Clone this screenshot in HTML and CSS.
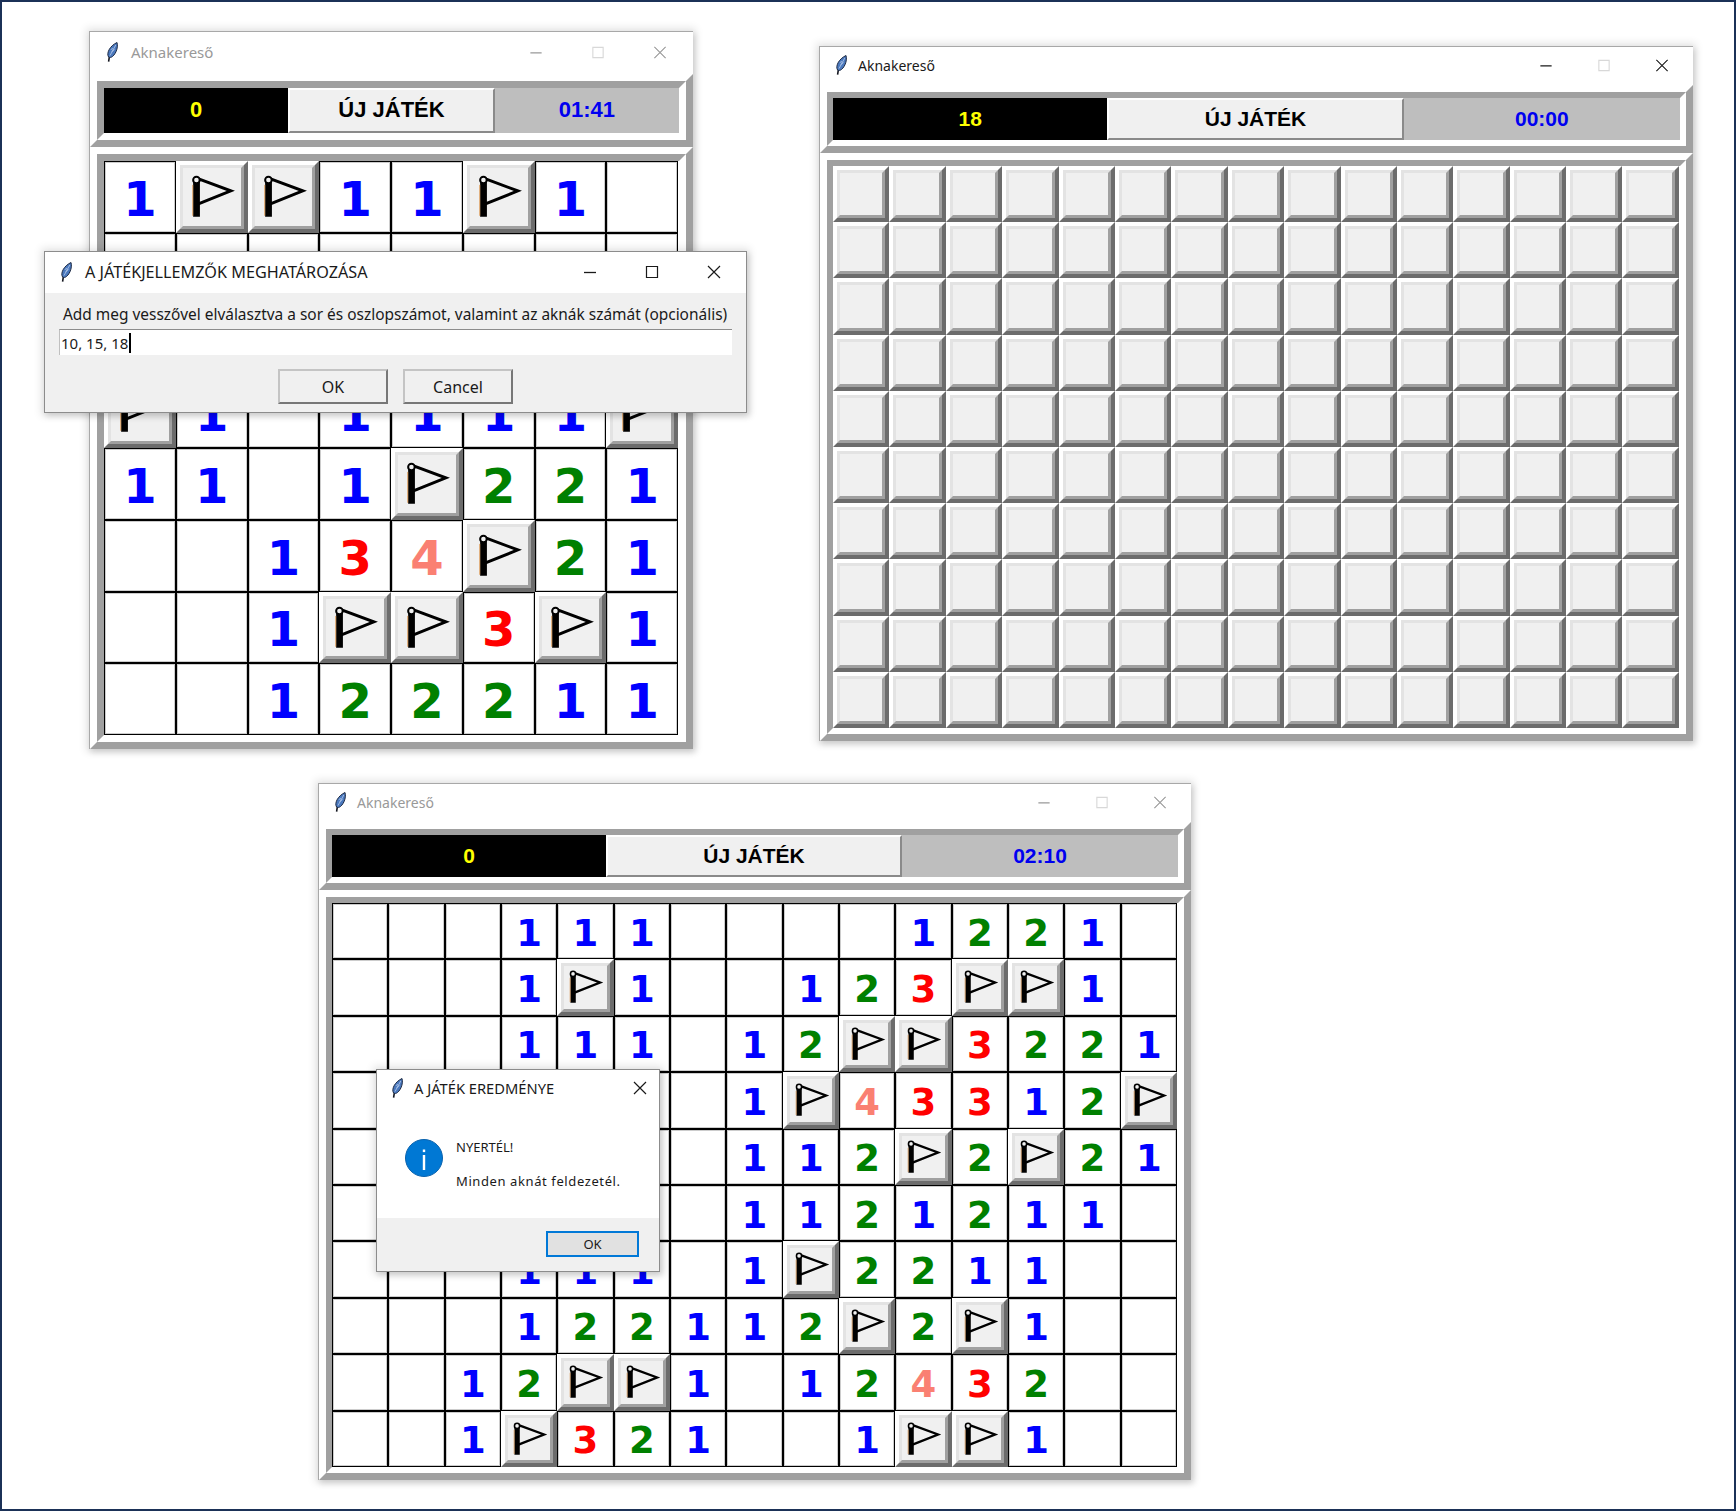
FILE: index.html
```html
<!DOCTYPE html>
<html>
	<head>
		<meta charset="utf-8"/>
		<title>Aknakereső</title>
		<link rel="stylesheet" href="styles.css">
	</head>
	<body>
		<svg class="defs" width="0" height="0">
			<symbol id="feather" viewBox="0 0 12 20">
				<path d="M3.400 14.500L2.600 19.600" fill="none" stroke="#10131c" stroke-width="1.600"/>
				<path d="M11 .5C12.200 5 10.500 11 6.500 14.500C5.300 15.500 3.600 15.800 2.600 15C.2 11.500 3.500 4 11 .5Z" fill="#4a78bd" stroke="#1d2a44" stroke-width="1"/>
				<path d="M9.800 3L4 13.500M7 6.500L4.800 7.500M8.500 7.500L5.500 9.800" fill="none" stroke="#c4d6f0" stroke-width=".7"/>
			</symbol>
			<symbol id="flag" viewBox="0 0 72 72">
				<path d="M20 17L55 30L20 44" fill="none" stroke="#000" stroke-width="3"/>
				<path d="M17.200 20H24V56H17.200Z" fill="#000"/>
				<path d="M16.800 24V55" fill="none" stroke="#d98a3a" stroke-width=".8"/>
				<circle cx="20.500" cy="19" r="3.300" fill="#f0f0f0" stroke="#000" stroke-width="2"/>
			</symbol>
			<symbol id="min" viewBox="0 0 16 16"><path d="M2 8.500H14" stroke="currentColor" stroke-width="1.300"/></symbol>
			<symbol id="max" viewBox="0 0 16 16"><path d="M2.500 2.500H13.500V13.500H2.500Z" fill="none" stroke="currentColor" stroke-width="1.200"/></symbol>
			<symbol id="close" viewBox="0 0 16 16"><path d="M2 2L14 14M14 2L2 14" fill="none" stroke="currentColor" stroke-width="1.200"/></symbol>
		</svg>

		<section class="window win-small inactive">
			<header class="titlebar">
				<svg class="feather"><use href="#feather"/></svg>
				<span class="title">Aknakereső</span>
				<span class="controls">
					<svg class="ctl"><use href="#min"/></svg>
					<svg class="ctl off"><use href="#max"/></svg>
					<svg class="ctl"><use href="#close"/></svg>
				</span>
			</header>
			<div class="ridge">
				<div class="groove status">
					<div class="mines">0</div>
					<div class="newgame">ÚJ JÁTÉK</div>
					<div class="clock">01:41</div>
				</div>
			</div>
			<div class="ridge">
				<div class="groove board" data-cols="8" data-rows="1FF11F1. ........ ........ F1.1111F 11.1F221 ..134F21 ..1FF3F1 ..122211"></div>
			</div>
		</section>

		<section class="window win-big win-new">
			<header class="titlebar">
				<svg class="feather"><use href="#feather"/></svg>
				<span class="title">Aknakereső</span>
				<span class="controls">
					<svg class="ctl"><use href="#min"/></svg>
					<svg class="ctl off"><use href="#max"/></svg>
					<svg class="ctl"><use href="#close"/></svg>
				</span>
			</header>
			<div class="ridge">
				<div class="groove status">
					<div class="mines">18</div>
					<div class="newgame">ÚJ JÁTÉK</div>
					<div class="clock">00:00</div>
				</div>
			</div>
			<div class="ridge">
				<div class="groove board" data-cols="15" data-rows="BBBBBBBBBBBBBBB BBBBBBBBBBBBBBB BBBBBBBBBBBBBBB BBBBBBBBBBBBBBB BBBBBBBBBBBBBBB BBBBBBBBBBBBBBB BBBBBBBBBBBBBBB BBBBBBBBBBBBBBB BBBBBBBBBBBBBBB BBBBBBBBBBBBBBB"></div>
			</div>
		</section>

		<section class="window win-big win-done inactive">
			<header class="titlebar">
				<svg class="feather"><use href="#feather"/></svg>
				<span class="title">Aknakereső</span>
				<span class="controls">
					<svg class="ctl"><use href="#min"/></svg>
					<svg class="ctl off"><use href="#max"/></svg>
					<svg class="ctl"><use href="#close"/></svg>
				</span>
			</header>
			<div class="ridge">
				<div class="groove status">
					<div class="mines">0</div>
					<div class="newgame">ÚJ JÁTÉK</div>
					<div class="clock">02:10</div>
				</div>
			</div>
			<div class="ridge">
				<div class="groove board" data-cols="15" data-rows="...111....1221. ...1F1..123FF1. ...111.12FF3221 .......1F43312F .......112F2F21 .......1121211. ...111.1F2211.. ...122112F2F1.. ..12FF1.12432.. ..1F321..1FF1.."></div>
			</div>
		</section>

		<section class="dialog dlg-setup">
			<header class="titlebar">
				<svg class="feather"><use href="#feather"/></svg>
				<span class="title">A JÁTÉKJELLEMZŐK MEGHATÁROZÁSA</span>
				<span class="controls">
					<svg class="ctl"><use href="#min"/></svg>
					<svg class="ctl"><use href="#max"/></svg>
					<svg class="ctl"><use href="#close"/></svg>
				</span>
			</header>
			<div class="setup-body">
				<div class="prompt">Add meg vesszővel elválasztva a sor és oszlopszámot, valamint az aknák számát (opcionális)</div>
				<div class="entry">10, 15, 18<span class="caret"></span></div>
				<div class="setup-buttons">
					<div class="tkbtn">OK</div>
					<div class="tkbtn">Cancel</div>
				</div>
			</div>
		</section>

		<section class="dialog dlg-result">
			<header class="titlebar">
				<svg class="feather"><use href="#feather"/></svg>
				<span class="title">A JÁTÉK EREDMÉNYE</span>
				<span class="controls">
					<svg class="ctl"><use href="#close"/></svg>
				</span>
			</header>
			<div class="result-body">
				<svg class="info" viewBox="0 0 38 38">
					<circle cx="19" cy="19" r="18.500" fill="#0078d4" stroke="#0a62ad"/>
					<rect x="17.800" y="10.500" width="2.400" height="2.600" fill="#fff"/>
					<rect x="17.800" y="16" width="2.400" height="15" fill="#fff"/>
				</svg>
				<div class="result-text">
					<p>NYERTÉL!</p>
					<p class="spaced">Minden aknát feldezetél.</p>
				</div>
			</div>
			<div class="result-foot">
				<div class="okbtn">OK</div>
			</div>
		</section>

		<script src="board.js"></script>
	</body>
</html>
```

FILE: styles.css
```css
html, body {
	margin: 0;
	padding: 0;
}
body {
	position: relative;
	width: 1736px;
	height: 1511px;
	overflow: hidden;
	background-color: #fff;
	box-shadow: inset 0 0 0 2px #1b3157;
	font-family: "Noto Sans", sans-serif;
}
.defs {
	position: absolute;
}

/* the windows sit on a free canvas */
.window, .dialog {
	position: absolute;
	box-sizing: border-box;
	box-shadow: 0 0 8px 3px rgba(0, 0, 0, 0.1), 2px 3px 6px rgba(0, 0, 0, 0.14);
}
.window {
	background-color: #fff;
	border-top: 1px solid #a8a8a8;
	border-left: 1px solid #a8a8a8;
	--ridge: 7px;
	--groove: 6px;
	--title-h: 38px;
	--status-h: 42px;
	--hi: 4px;
	--lo: 3px;
	--num: 37px;
	--head: 21px;
	--ctl-r: 2px;
}
.win-small {
	left: 89px;
	top: 31px;
	width: 604px;
	--ridge: 7px;
	--groove: 7px;
	--title-h: 42px;
	--status-h: 45px;
	--cols: 184fr 206fr 184fr;
	--cell-w: 71.75px;
	--cell-h: 71.75px;
	--num: 48px;
	--head: 22px;
	--ctl-w: 62px;
	--ctl-s: 15px;
	--title-size: 15px;
	--feather-l: 16px;
	--feather-r: 13px;
}
.win-big {
	--cols: 274fr 296fr 276fr;
	--ctl-w: 58px;
	--ctl-s: 15px;
	--title-size: 14px;
	--feather-l: 15px;
	--feather-r: 11px;
}
.win-new {
	left: 819px;
	top: 46px;
	width: 874px;
	--cell-w: 56.4px;
	--cell-h: 56.2px;
}
.win-done {
	left: 318px;
	top: 783px;
	width: 873px;
	--cell-w: 56.33px;
	--cell-h: 56.4px;
}

.titlebar {
	display: flex;
	align-items: center;
	box-sizing: border-box;
	height: var(--title-h);
	padding: 0 var(--ctl-r, 0) 2px var(--feather-l, 15px);
	background-color: #fff;
	color: #1a1a1a;
}
.inactive .titlebar {
	color: #999;
}
.feather {
	flex: none;
	width: 12px;
	height: 20px;
	margin-right: var(--feather-r, 12px);
}
.title {
	font-size: var(--title-size);
	white-space: nowrap;
}
.controls {
	display: flex;
	margin-left: auto;
}
.ctl {
	box-sizing: content-box;
	width: var(--ctl-s);
	height: var(--ctl-s);
	padding: 0 calc((var(--ctl-w) - var(--ctl-s)) / 2);
}
.ctl.off {
	color: #d8d8d8;
}

/* tk groove: two nested borders */
.ridge {
	border-style: solid;
	border-width: var(--ridge);
	border-color: #fff #a0a0a0 #a0a0a0 #fff;
}
.groove {
	border-style: solid;
	border-width: var(--groove);
	border-color: #a0a0a0 #fff #fff #a0a0a0;
}

.status {
	display: grid;
	grid-template-columns: var(--cols);
	height: var(--status-h);
	font-family: "Liberation Sans", Arial, sans-serif;
	font-weight: bold;
	font-size: var(--head);
}
.status div {
	display: flex;
	align-items: center;
	justify-content: center;
}
.win-small .status div {
	padding-bottom: 2px;
}
.mines {
	background-color: #000;
	color: #ff0;
}
.newgame {
	box-sizing: border-box;
	background-color: #f0f0f0;
	color: #000;
	border: 2px solid;
	border-color: #fff #8a8a8a #8a8a8a #fff;
}
.clock {
	background-color: #bebebe;
	color: #0000f0;
}

.board {
	display: grid;
	grid-auto-rows: var(--cell-h);
	grid-template-columns: repeat(var(--n), var(--cell-w));
}
.cell {
	display: flex;
	align-items: center;
	justify-content: center;
	box-sizing: border-box;
	padding-top: 4px;
	background-color: #fff;
	border: 1px solid #000;
	box-shadow: inset 0 0 0 1px rgba(0, 0, 0, 0.2);
	font-family: "DejaVu Sans", Verdana, sans-serif;
	font-weight: bold;
	font-size: var(--num);
	line-height: 1;
}
.n1 { color: #0000ff; }
.n2 { color: #008000; }
.n3 { color: #ff0000; }
.n4 { color: #fa8072; }
.cell.up {
	position: relative;
	padding-top: 0;
	border-style: solid;
	border-width: var(--hi);
	border-color: #fff #6c6c6c #6c6c6c #fff;
	background-color: #f0f0f0;
	box-shadow: none;
}
.face {
	display: flex;
	box-sizing: border-box;
	flex: 1;
	align-self: stretch;
	border: var(--lo) solid;
	border-color: #e3e3e3 #a0a0a0 #a0a0a0 #e3e3e3;
}
/* the flag is drawn over the button face */
.flag {
	position: absolute;
	left: calc(var(--hi) * -1);
	top: calc(var(--hi) * -1);
	width: var(--cell-w);
	height: var(--cell-h);
}

/* dialogs */
.dialog {
	background-color: #fff;
	border: 1px solid #8c8c8c;
	color: #1a1a1a;
}
.dlg-setup {
	left: 44px;
	top: 251px;
	width: 703px;
	height: 162px;
	--title-h: 41px;
	--ctl-w: 62px;
	--ctl-s: 16px;
	--ctl-r: 1px;
	--title-size: 16.200px;
	--feather-l: 15px;
	--feather-r: 13px;
}
.setup-body {
	box-sizing: border-box;
	height: 119px;
	padding: 10px 14px 0;
	background-color: #f0f0f0;
}
.prompt {
	padding-left: 4px;
	font-size: 15.450px;
	line-height: 22px;
	white-space: nowrap;
}
.entry {
	display: flex;
	align-items: center;
	box-sizing: border-box;
	height: 26px;
	margin-top: 4px;
	padding-left: 1px;
	background-color: #fff;
	border-top: 1px solid #8c8c8c;
	border-left: 1px solid #c0c0c0;
	font-size: 15px;
}
.caret {
	width: 2px;
	height: 20px;
	margin-left: 1px;
	background-color: #000;
}
.setup-buttons {
	display: flex;
	justify-content: center;
	gap: 15px;
	margin-top: 14px;
}
.tkbtn {
	display: flex;
	align-items: center;
	justify-content: center;
	box-sizing: border-box;
	width: 110px;
	height: 35px;
	background-color: #f0f0f0;
	border: 2px solid;
	border-color: #c4c4c4 #777 #777 #c4c4c4;
	font-size: 16px;
}

.dlg-result {
	left: 376px;
	top: 1069px;
	width: 284px;
	height: 203px;
	--title-h: 38px;
	--ctl-w: 38px;
	--ctl-s: 16px;
	--title-size: 14.700px;
	--feather-l: 14px;
	--feather-r: 11px;
}
.result-body {
	display: flex;
	gap: 13px;
	box-sizing: border-box;
	height: 110px;
	padding: 31px 0 0 28px;
}
.info {
	flex: none;
	width: 38px;
	height: 38px;
}
.result-text {
	margin-top: -2px;
	font-size: 13px;
	line-height: 20px;
	white-space: nowrap;
}
.result-text p {
	margin: 0 0 14px;
}
.result-text .spaced {
	letter-spacing: 0.6px;
}
.result-foot {
	display: flex;
	justify-content: flex-end;
	box-sizing: border-box;
	height: 53px;
	padding: 13px 20px 0 0;
	background-color: #f0f0f0;
}
.okbtn {
	display: flex;
	align-items: center;
	justify-content: center;
	box-sizing: border-box;
	width: 93px;
	height: 26px;
	background-color: #e1e1e1;
	border: 2px solid #0078d7;
	font-size: 13px;
}
```

FILE: board.js
```js
// a board is written in data-rows: . open cell, F flag, B untouched button, digit = neighbours
document.querySelectorAll(".board").forEach(function (board) {
	board.style.setProperty("--n", board.dataset.cols);
	let html = "";
	board.dataset.rows.split(" ").forEach(function (row) {
		for (const c of row) {
			if (c === "F") {
				html += '<div class="cell up"><span class="face"></span><svg class="flag"><use href="#flag"/></svg></div>';
			} else if (c === "B") {
				html += '<div class="cell up"><span class="face"></span></div>';
			} else if (c === ".") {
				html += '<div class="cell"></div>';
			} else {
				html += '<div class="cell n' + c + '">' + c + "</div>";
			}
		}
	});
	board.innerHTML = html;
});
```
